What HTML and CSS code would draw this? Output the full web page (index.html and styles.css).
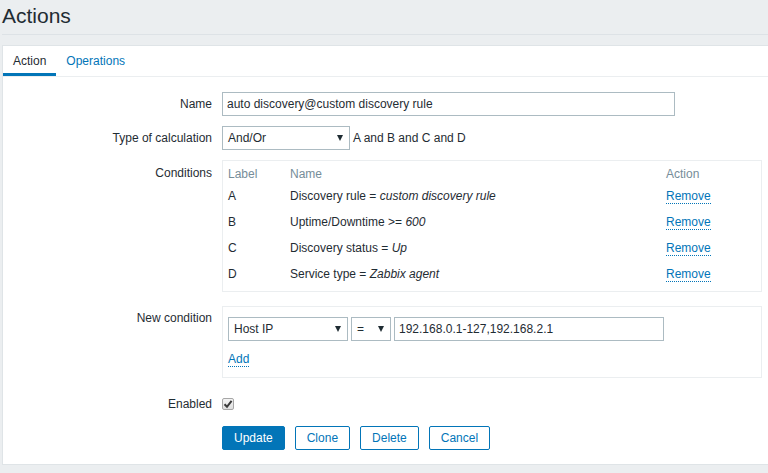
FILE: index.html
```html
<!DOCTYPE html>
<html lang="en">
<head>
<meta charset="utf-8">
<title>Actions</title>
<link rel="stylesheet" href="styles.css">
</head>
<body>
<header class="page-header">
  <h1 class="page-title">Actions</h1>
</header>
<main class="panel">
  <ul class="tabs">
    <li class="tab tab-active">Action</li>
    <li class="tab"><a class="tab-link" href="#">Operations</a></li>
  </ul>
  <form class="form">
    <label class="lbl">Name</label>
    <div class="ctl">
      <input class="text-input name-input" type="text" value="auto discovery@custom discovery rule">
    </div>

    <label class="lbl">Type of calculation</label>
    <div class="ctl ctl-inline">
      <div class="select calc-select"><span>And/Or</span><i class="caret"></i></div>
      <span class="formula">A and B and C and D</span>
    </div>

    <label class="lbl lbl-box">Conditions</label>
    <div class="ctl">
      <div class="box cond-box">
        <table class="cond-table">
          <colgroup><col class="c-label"><col><col class="c-action"></colgroup>
          <thead>
            <tr><th>Label</th><th>Name</th><th>Action</th></tr>
          </thead>
          <tbody>
            <tr><td>A</td><td>Discovery rule = <em>custom discovery rule</em></td><td><a class="link" href="#">Remove</a></td></tr>
            <tr><td>B</td><td>Uptime/Downtime &gt;= <em>600</em></td><td><a class="link" href="#">Remove</a></td></tr>
            <tr><td>C</td><td>Discovery status = <em>Up</em></td><td><a class="link" href="#">Remove</a></td></tr>
            <tr><td>D</td><td>Service type = <em>Zabbix agent</em></td><td><a class="link" href="#">Remove</a></td></tr>
          </tbody>
        </table>
      </div>
    </div>

    <label class="lbl">New condition</label>
    <div class="ctl">
      <div class="box newcond-box">
        <div class="newcond-fields">
          <div class="select host-select"><span>Host IP</span><i class="caret"></i></div>
          <div class="select op-select"><span>=</span><i class="caret"></i></div>
          <input class="text-input ip-input" type="text" value="192.168.0.1-127,192.168.2.1">
        </div>
        <div class="add-row"><a class="link" href="#">Add</a></div>
      </div>
    </div>

    <label class="lbl">Enabled</label>
    <div class="ctl ctl-inline">
      <span class="checkbox"><svg width="10" height="10" viewBox="0 0 10 10"><path d="M1.5 5.2 L4 7.8 L8.6 1.8" fill="none" stroke="#3a3a3a" stroke-width="2"/></svg></span>
    </div>

    <div class="buttons">
      <button class="btn btn-primary" type="button">Update</button>
      <button class="btn" type="button">Clone</button>
      <button class="btn" type="button">Delete</button>
      <button class="btn" type="button">Cancel</button>
    </div>
  </form>
</main>
</body>
</html>
```
FILE: styles.css
```css
html, body {
  margin: 0;
  padding: 0;
}
body {
  background: #ebeef0;
  font-family: "Liberation Sans", Arial, sans-serif;
  font-size: 12px;
  line-height: 14px;
  color: #1f2c33;
}
.page-header {
  margin: 0 0 10px 2px;
  height: 34px;
  border-bottom: 1px solid #dde2e6;
}
.page-title {
  margin: 0;
  font-size: 21px;
  font-weight: normal;
  line-height: 32px;
  color: #1f2c33;
}
.panel {
  display: block;
  margin-left: 2px;
  background: #fff;
  border: 1px solid #dfe4e7;
  border-right: none;
}
.tabs {
  list-style: none;
  margin: 0;
  padding: 0;
  display: flex;
  border-bottom: 1px solid #ebeef0;
}
.tab {
  padding: 8px 10px 5px;
  line-height: 14px;
  border-bottom: 3px solid transparent;
}
.tab-active {
  border-bottom-color: #0275b8;
}
.tab-link {
  color: #0275b8;
  text-decoration: none;
}
.form {
  display: grid;
  grid-template-columns: 209px 1fr;
  column-gap: 10px;
  row-gap: 10px;
  padding: 15px 0 14px;
}
.lbl {
  text-align: right;
  line-height: 24px;
}
.lbl-box {
  padding-top: 1px;
}
.ctl-inline {
  display: flex;
  align-items: center;
}
.text-input {
  box-sizing: border-box;
  height: 24px;
  margin: 0;
  padding: 0 4px;
  border: 1px solid #acbbc2;
  border-radius: 0;
  font-family: inherit;
  font-size: 12px;
  color: #1f2c33;
  background: #fff;
  outline: none;
}
.name-input {
  width: 453px;
}
.select {
  box-sizing: border-box;
  height: 24px;
  display: flex;
  align-items: center;
  justify-content: space-between;
  padding: 0 6px 0 5px;
  border: 1px solid #acbbc2;
  background: #fff;
}
.caret {
  width: 0;
  height: 0;
  border-left: 3px solid transparent;
  border-right: 3px solid transparent;
  border-top: 6px solid #1f2c33;
}
.calc-select {
  width: 128px;
}
.formula {
  margin-left: 3px;
}
.box {
  border: 1px solid #ebeef0;
  box-sizing: border-box;
  width: 540px;
}
.cond-box {
  padding: 0 5px 4px;
  margin-bottom: 4px;
}
.cond-table {
  width: 100%;
  border-collapse: collapse;
  table-layout: fixed;
}
.c-label {
  width: 62px;
}
.c-action {
  width: 90px;
}
.cond-table th {
  text-align: left;
  font-weight: normal;
  color: #768d99;
  padding: 6px 0 2px;
  line-height: 14px;
}
.cond-table td {
  padding: 6px 0;
  line-height: 14px;
  white-space: nowrap;
}
.link {
  color: #0275b8;
  text-decoration: none;
  border-bottom: 1px dotted #0275b8;
}
.newcond-box {
  padding: 10px 5px 11px;
  margin-bottom: 4px;
}
.newcond-fields {
  display: flex;
  gap: 3px;
}
.host-select {
  width: 120px;
}
.op-select {
  width: 40px;
}
.ip-input {
  width: 270px;
}
.add-row {
  margin-top: 11px;
  line-height: 14px;
}
.checkbox {
  box-sizing: border-box;
  width: 12px;
  height: 12px;
  border: 1px solid #a6a6a6;
  border-radius: 2px;
  background: linear-gradient(#f4f4f4, #dedede);
  display: flex;
  align-items: center;
  justify-content: center;
}
.checkbox svg {
  display: block;
}
.buttons {
  grid-column: 2;
  display: flex;
  gap: 10px;
}
.btn {
  box-sizing: border-box;
  height: 24px;
  padding: 0 11px;
  border: 1px solid #0275b8;
  border-radius: 2px;
  background: #fff;
  color: #0275b8;
  font-family: inherit;
  font-size: 12px;
  line-height: 22px;
  cursor: pointer;
}
.btn-primary {
  background: #0275b8;
  color: #fff;
}
```
